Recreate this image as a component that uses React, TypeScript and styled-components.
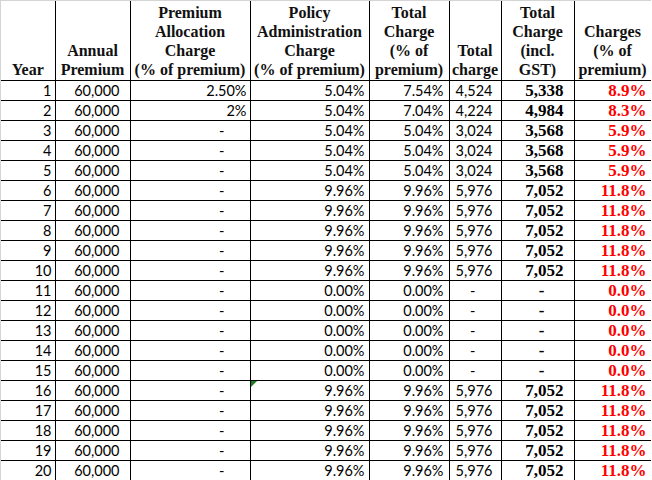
import React from 'react';
import styled, { createGlobalStyle } from 'styled-components';

const GlobalStyle = createGlobalStyle`
  html, body {
    margin: 0;
    padding: 0;
    background: #ffffff;
  }
`;

const Sheet = styled.div`
  width: 651px;
  height: 480px;
  overflow: hidden;
  border-top: 1px solid #d4d4d4;
  border-left: 1px solid #d4d4d4;
  box-sizing: border-box;
`;

const Table = styled.table`
  border-collapse: collapse;
  table-layout: fixed;
  width: 650px;
  font-family: Lato, 'Liberation Sans', sans-serif;
  font-size: 14px;
  color: #000000;
`;

const Head = styled.th`
  height: 78px;
  padding: 0 1px 1px;
  vertical-align: bottom;
  text-align: center;
  font-family: 'Liberation Serif', serif;
  font-weight: bold;
  font-size: 16px;
  line-height: 19px;
  border: 1px solid #000000;
  border-top: none;
  color: #111111;
  &:first-child {
    border-left: none;
  }
`;

type CellProps = { $pad?: number; $bold?: boolean; $red?: boolean };

const Cell = styled.td<CellProps>`
  position: relative;
  height: 19px;
  padding: 0 ${(p) => p.$pad ?? 4}px 0 0;
  text-align: right;
  line-height: 19px;
  white-space: nowrap;
  border: 1px solid #000000;
  font-family: ${(p) => (p.$bold ? "'Liberation Serif', serif" : "Lato, 'Liberation Sans', sans-serif")};
  font-weight: ${(p) => (p.$bold ? 'bold' : 'normal')};
  font-size: ${(p) => (p.$bold ? '17px' : '14.5px')};
  color: ${(p) => (p.$red ? '#ff0000' : '#000000')};
  &:first-child {
    border-left: none;
  }
`;

const Flag = styled.span`
  position: absolute;
  left: 0;
  top: 0;
  width: 0;
  height: 0;
  border-top: 6px solid #1e7b1e;
  border-right: 6px solid transparent;
`;

const widths = [54, 75, 120, 119, 80, 52, 73, 77];

type Row = [string, string, string, string, string, string];

const rows: Row[] = [
  ['2.50%', '5.04%', '7.54%', '4,524', '5,338', '8.9%'],
  ['2%', '5.04%', '7.04%', '4,224', '4,984', '8.3%'],
  ['-', '5.04%', '5.04%', '3,024', '3,568', '5.9%'],
  ['-', '5.04%', '5.04%', '3,024', '3,568', '5.9%'],
  ['-', '5.04%', '5.04%', '3,024', '3,568', '5.9%'],
  ...Array.from({ length: 5 }, (): Row => ['-', '9.96%', '9.96%', '5,976', '7,052', '11.8%']),
  ...Array.from({ length: 5 }, (): Row => ['-', '0.00%', '0.00%', '-', '-', '0.0%']),
  ...Array.from({ length: 5 }, (): Row => ['-', '9.96%', '9.96%', '5,976', '7,052', '11.8%']),
];

const headers = [
  ['Year'],
  ['Annual', 'Premium'],
  ['Premium', 'Allocation', 'Charge', '(% of premium)'],
  ['Policy', 'Administration', 'Charge', '(% of premium)'],
  ['Total', 'Charge', '(% of', 'premium)'],
  ['Total', 'charge'],
  ['Total', 'Charge', '(incl.', 'GST)'],
  ['Charges', '(% of', 'premium)'],
];

const App = () => {
  return (
    <>
      <GlobalStyle />
      <Sheet>
        <Table>
          <colgroup>
            {widths.map((w, i) => (
              <col key={i} style={{ width: w }} />
            ))}
          </colgroup>
          <thead>
            <tr>
              {headers.map((lines, i) => (
                <Head key={i}>
                  {lines.map((l, j) => (
                    <div key={j}>{l}</div>
                  ))}
                </Head>
              ))}
            </tr>
          </thead>
          <tbody>
            {rows.map((r, i) => (
              <tr key={i}>
                <Cell $pad={3}>{i + 1}</Cell>
                <Cell $pad={10}>60,000</Cell>
                <Cell $pad={r[0] === '-' ? 25 : 3}>{r[0]}</Cell>
                <Cell>
                  {i === 15 && <Flag />}
                  {r[1]}
                </Cell>
                <Cell $pad={5}>{r[2]}</Cell>
                <Cell $pad={r[3] === '-' ? 25 : 8}>{r[3]}</Cell>
                <Cell $bold $pad={r[4] === '-' ? 29 : 10}>
                  {r[4]}
                </Cell>
                <Cell $bold $red $pad={4}>
                  {r[5]}
                </Cell>
              </tr>
            ))}
          </tbody>
        </Table>
      </Sheet>
    </>
  );
};

export default App;
